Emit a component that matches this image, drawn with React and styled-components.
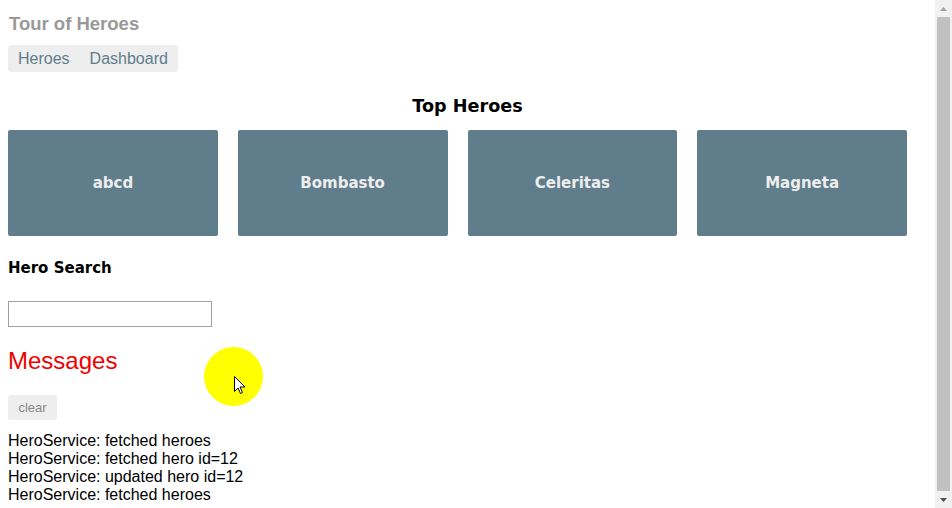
import styled, { createGlobalStyle } from "styled-components";

const GlobalStyle = createGlobalStyle`
  html, body {
    margin: 0;
    padding: 0;
    overflow: hidden;
    background: #fff;
  }
`;

const Frame = styled.div`
  display: flex;
  height: 508px;
  width: 952px;
`;

const Page = styled.div`
  flex: 1;
  position: relative;
  padding: 8px;
  font-family: Arial, "Liberation Sans", sans-serif;
  color: #000;
`;

const Title = styled.h1`
  margin: 5px 0 0 1px;
  font-size: 18.5px;
  line-height: 22px;
  color: #999;
  font-weight: bold;
`;

const Nav = styled.nav`
  display: inline-flex;
  margin-top: 10px;
  background: #eee;
  border-radius: 3px;
`;

const NavLink = styled.a`
  padding: 5px 10px 4px;
  font-size: 16px;
  line-height: 18px;
  color: #607d8b;
  text-decoration: none;
`;

const Heading = styled.h2`
  margin: 22px 0 0;
  text-align: center;
  font-family: "DejaVu Sans", Verdana, sans-serif;
  font-size: 17.6px;
  line-height: 25px;
  font-weight: bold;
`;

const Grid = styled.div`
  display: flex;
  gap: 20px;
  padding-right: 20px;
  margin-top: 11px;
`;

const Card = styled.div`
  flex: 1;
  height: 106px;
  background: #607d8b;
  border-radius: 2px;
  display: flex;
  align-items: center;
  justify-content: center;
  color: #eee;
  font-family: "DejaVu Sans", Verdana, sans-serif;
  font-weight: bold;
  font-size: 15px;
`;

const SearchLabel = styled.h4`
  margin: 22px 0 0;
  font-family: "DejaVu Sans", Verdana, sans-serif;
  font-size: 15px;
  line-height: 20px;
  font-weight: bold;
`;

const SearchInput = styled.input`
  display: block;
  margin-top: 23px;
  width: 204px;
  height: 26px;
  box-sizing: border-box;
  border: 1px solid #a0a0a0;
  padding: 0 4px;
`;

const MessagesTitle = styled.h2`
  margin: 20px 0 0;
  color: #ee0000;
  font-family: Arial, "Liberation Sans", sans-serif;
  font-weight: normal;
  font-size: 24px;
  line-height: 28px;
`;

const ClearButton = styled.button`
  display: block;
  margin-top: 20px;
  border: none;
  border-radius: 3px;
  background: #eee;
  color: #888;
  font-family: Arial, "Liberation Sans", sans-serif;
  font-size: 13px;
  width: 49px;
  height: 25px;
  padding: 0;
`;

const MessageList = styled.div`
  margin-top: 12px;
  font-size: 16px;
  line-height: 18px;
`;

const ClickMark = styled.div`
  position: absolute;
  left: 204px;
  top: 347px;
  width: 59px;
  height: 59px;
  border-radius: 50%;
  background: #ffff00;
`;

const Pointer = styled.svg`
  position: absolute;
  left: 234px;
  top: 376px;
`;

const ScrollTrack = styled.div`
  width: 17px;
  background: #f1f1f1;
  display: flex;
  flex-direction: column;
  align-items: center;
`;

const ScrollArrow = styled.div`
  height: 17px;
  display: flex;
  align-items: center;
  justify-content: center;
`;

const ScrollThumb = styled.div`
  flex: 1;
  width: 13px;
  background: #c1c1c1;
`;

const heroes = ["abcd", "Bombasto", "Celeritas", "Magneta"];
const messages = [
  "HeroService: fetched heroes",
  "HeroService: fetched hero id=12",
  "HeroService: updated hero id=12",
  "HeroService: fetched heroes",
];

export default function App() {
  return (
    <>
      <GlobalStyle />
      <Frame>
        <Page>
          <Title>Tour of Heroes</Title>
          <Nav>
            <NavLink href="#">Heroes</NavLink>
            <NavLink href="#">Dashboard</NavLink>
          </Nav>
          <Heading>Top Heroes</Heading>
          <Grid>
            {heroes.map((h) => (
              <Card key={h}>{h}</Card>
            ))}
          </Grid>
          <SearchLabel>Hero Search</SearchLabel>
          <SearchInput />
          <MessagesTitle>Messages</MessagesTitle>
          <ClearButton>clear</ClearButton>
          <MessageList>
            {messages.map((m, i) => (
              <div key={i}>{m}</div>
            ))}
          </MessageList>
          <ClickMark />
          <Pointer width="12" height="19" viewBox="0 0 12 19">
            <path
              d="M0.5 0.5 L0.5 15.5 L4 12 L6.5 17.5 L8.5 16.5 L6 11 L11 11 Z"
              fill="#fff"
              stroke="#000"
              strokeWidth="1"
              strokeLinejoin="round"
            />
          </Pointer>
        </Page>
        <ScrollTrack>
          <ScrollArrow>
            <svg width="7" height="4" viewBox="0 0 7 4">
              <path d="M0 4 L3.5 0 L7 4 Z" fill="#a3a3a3" />
            </svg>
          </ScrollArrow>
          <ScrollThumb />
          <ScrollArrow>
            <svg width="7" height="4" viewBox="0 0 7 4">
              <path d="M0 0 L7 0 L3.5 4 Z" fill="#505050" />
            </svg>
          </ScrollArrow>
        </ScrollTrack>
      </Frame>
    </>
  );
}
